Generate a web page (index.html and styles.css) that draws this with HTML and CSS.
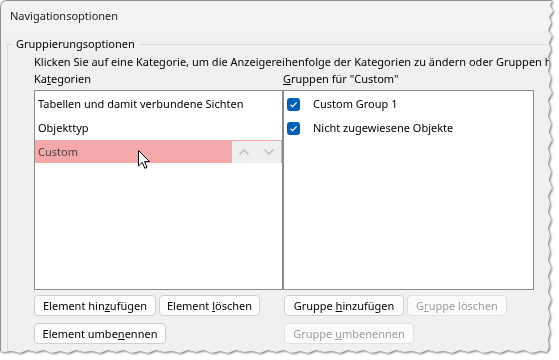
FILE: index.html
```html
<!DOCTYPE html>
<html lang="de">
<head>
    <meta charset="UTF-8">
    <title>Navigationsoptionen</title>
    <link rel="stylesheet" href="styles.css">
</head>
<body>
    <div class="shot">
        <div class="dialog">
            <div class="titlebar">Navigationsoptionen</div>
            <div class="dialog-body">
                <fieldset class="group">
                    <legend>Gruppierungsoptionen</legend>
                    <div class="group-inner">
                        <p class="hint">Klicken Sie auf eine Kategorie, um die Anzeigereihenfolge der Kategorien zu ändern oder Gruppen hinzuzufügen.</p>
                        <div class="columns">
                            <!-- Kategorien -->
                            <div class="col">
                                <div class="col-label">Ka<u>t</u>egorien</div>
                                <div class="listbox listbox-left">
                                    <div class="list-row">Tabellen und damit verbundene Sichten</div>
                                    <div class="list-row">Objekttyp</div>
                                    <div class="list-row list-row-selected">
                                        <span class="row-text">Custom</span>
                                        <span class="row-arrows">
                                            <svg width="10" height="6" viewBox="0 0 10 6"><polyline points="0.5,5.5 5,1 9.5,5.5" fill="none" stroke="#b3b3b3" stroke-width="1.1"/></svg>
                                            <svg width="10" height="6" viewBox="0 0 10 6"><polyline points="0.5,0.5 5,5 9.5,0.5" fill="none" stroke="#b3b3b3" stroke-width="1.1"/></svg>
                                        </span>
                                    </div>
                                </div>
                                <div class="btn-row">
                                    <button class="btn btn-el-add">Element hin<u>z</u>ufügen</button>
                                    <button class="btn btn-el-del">Element <u>l</u>öschen</button>
                                </div>
                                <div class="btn-row">
                                    <button class="btn btn-el-ren">Element umbe<u>n</u>ennen</button>
                                </div>
                            </div>

                            <!-- Gruppen -->
                            <div class="col">
                                <div class="col-label"><u>G</u>ruppen für "Custom"</div>
                                <div class="listbox listbox-right">
                                    <div class="list-row check-row">
                                        <svg class="check" width="13" height="13" viewBox="0 0 13 13"><rect width="13" height="13" rx="3" fill="#005fb8"/><path d="M3.4 6.7 L5.5 8.7 L9.6 4.5" fill="none" stroke="#fff" stroke-width="1.1"/></svg>
                                        <span>Custom Group 1</span>
                                    </div>
                                    <div class="list-row check-row">
                                        <svg class="check" width="13" height="13" viewBox="0 0 13 13"><rect width="13" height="13" rx="3" fill="#005fb8"/><path d="M3.4 6.7 L5.5 8.7 L9.6 4.5" fill="none" stroke="#fff" stroke-width="1.1"/></svg>
                                        <span>Nicht zugewiesene Objekte</span>
                                    </div>
                                </div>
                                <div class="btn-row">
                                    <button class="btn btn-gr-add">Gruppe <u>h</u>inzufügen</button>
                                    <button class="btn btn-gr-del" disabled>G<u>r</u>uppe löschen</button>
                                </div>
                                <div class="btn-row">
                                    <button class="btn btn-gr-ren" disabled>Gruppe <u>u</u>mbenennen</button>
                                </div>
                            </div>
                        </div>
                    </div>
                </fieldset>
            </div>
        </div>

        <!-- Mauszeiger -->
        <svg class="cursor" width="13" height="20" viewBox="0 0 13 20">
            <path d="M0.5 0.5 L0.5 16 L4.3 12.4 L6.8 18.3 L9 17.4 L6.6 11.6 L11.6 11.6 Z" fill="#fff" stroke="#000" stroke-width="1" stroke-linejoin="round"/>
        </svg>
    </div>
</body>
</html>
```

FILE: styles.css
```css
:root {
    --dialog-bg: #f0f0f0;
    --title-bg: #f3f3f3;
    --frame: #8f8f8f;
    --group-line: #dcdcdc;
    --list-border: #8a8a8a;
    --selected: #f5a8a9;
    --accent: #005fb8;
    --btn-border: #d0d0d0;
    --disabled: #9d9d9d;
}

body {
    margin: 0;
    background: #fff;
    font-family: "Noto Sans", "Open Sans", sans-serif;
    font-size: 11px;
    color: #000;
}

.shot {
    position: relative;
    width: 559px;
    height: 360px;
    filter: drop-shadow(1px 1px 1px rgba(0,0,0,0.55));
}

/* Fenster mit abgerissenem Rand */
.dialog {
    width: 558px;
    height: 359px;
    overflow: hidden;
    background: var(--dialog-bg);
    border-top: 1px solid var(--frame);
    border-left: 1px solid var(--frame);
    border-top-left-radius: 7px;
    clip-path: polygon(0 0, 552px 0, 550px 6px, 553px 11px, 549px 17px, 551px 23px, 548px 30px, 552px 36px, 549px 43px, 551px 50px, 548px 57px, 550px 64px, 548px 71px, 551px 78px, 549px 86px, 552px 93px, 548px 100px, 550px 108px, 548px 116px, 551px 124px, 549px 132px, 552px 140px, 548px 148px, 550px 156px, 548px 164px, 551px 172px, 549px 180px, 552px 188px, 548px 196px, 550px 204px, 548px 212px, 551px 220px, 548px 228px, 550px 236px, 548px 244px, 550px 252px, 548px 260px, 551px 268px, 548px 276px, 550px 284px, 548px 292px, 551px 300px, 548px 308px, 550px 316px, 548px 324px, 550px 332px, 548px 340px, 549px 347px, 547px 352px, 540px 351px, 532px 353px, 524px 350px, 516px 352px, 508px 350px, 500px 353px, 492px 351px, 484px 353px, 476px 350px, 468px 352px, 460px 350px, 452px 353px, 444px 351px, 436px 352px, 428px 350px, 420px 353px, 412px 351px, 404px 352px, 396px 350px, 388px 353px, 380px 351px, 372px 353px, 364px 350px, 356px 352px, 348px 350px, 340px 353px, 332px 351px, 324px 352px, 316px 350px, 308px 353px, 300px 351px, 292px 353px, 284px 350px, 276px 352px, 268px 350px, 260px 353px, 252px 351px, 244px 352px, 236px 350px, 228px 353px, 220px 351px, 212px 353px, 204px 350px, 196px 352px, 188px 350px, 180px 353px, 172px 351px, 164px 352px, 156px 350px, 148px 353px, 140px 351px, 132px 353px, 124px 350px, 116px 352px, 108px 350px, 100px 353px, 92px 351px, 84px 352px, 76px 350px, 68px 353px, 60px 351px, 52px 353px, 44px 350px, 36px 352px, 28px 350px, 20px 353px, 12px 351px, 4px 352px, 0 351px);
}

.titlebar {
    height: 30px;
    line-height: 30px;
    padding-left: 9px;
    background: var(--title-bg);
    color: #1a1a1a;
}

.dialog-body {
    padding: 5px 0 0 6px;
}

.group {
    margin: 0;
    padding: 0;
    width: 580px;
    height: 340px;
    border: 1px solid var(--group-line);
    min-inline-size: 0;
}

.group legend {
    margin-left: 5px;
    padding: 0 3px;
    line-height: 16px;
}

.group-inner {
    padding-left: 26px;
}

.hint {
    margin: 2px 0 0;
    line-height: 16px;
    white-space: nowrap;
}

.columns {
    display: grid;
    grid-template-columns: 249px 251px;
}

.col-label {
    margin-top: 1px;
    line-height: 16px;
    height: 16px;
}

.listbox {
    margin-top: 3px;
    height: 197px;
    padding-top: 1px;
    background: #fff;
    border: 1px solid var(--list-border);
}

.list-row {
    height: 24px;
    line-height: 24px;
    padding-left: 3px;
    white-space: nowrap;
    display: flex;
    align-items: center;
}

.list-row-selected {
    background: var(--selected);
    color: #4e3c3e;
    height: 23px;
    margin-bottom: 1px;
    justify-content: space-between;
}

.row-arrows {
    display: flex;
    align-items: center;
    justify-content: space-around;
    width: 49px;
    height: 22px;
    margin-right: 1px;
    background: #efefef;
}

.check-row {
    padding-left: 3px;
    gap: 13px;
}

.check {
    display: block;
    flex: none;
}

.btn-row {
    display: flex;
    gap: 3px;
    margin-top: 5px;
}

.btn-row + .btn-row {
    margin-top: 7px;
}

.btn {
    height: 21px;
    padding: 0;
    font: inherit;
    color: #000;
    background: #fdfdfd;
    border: 1px solid var(--btn-border);
    border-radius: 4px;
}

.btn:disabled {
    color: var(--disabled);
    background: #fbfbfb;
    border-color: #e0e0e0;
}

.btn-el-add { width: 122px; }
.btn-el-del { width: 101px; }
.btn-el-ren { width: 132px; }
.btn-gr-add { width: 120px; margin-left: 1px; }
.btn-gr-del { width: 100px; }
.btn-gr-ren { width: 130px; margin-left: 1px; }

.cursor {
    position: absolute;
    left: 138px;
    top: 150px;
}
```
